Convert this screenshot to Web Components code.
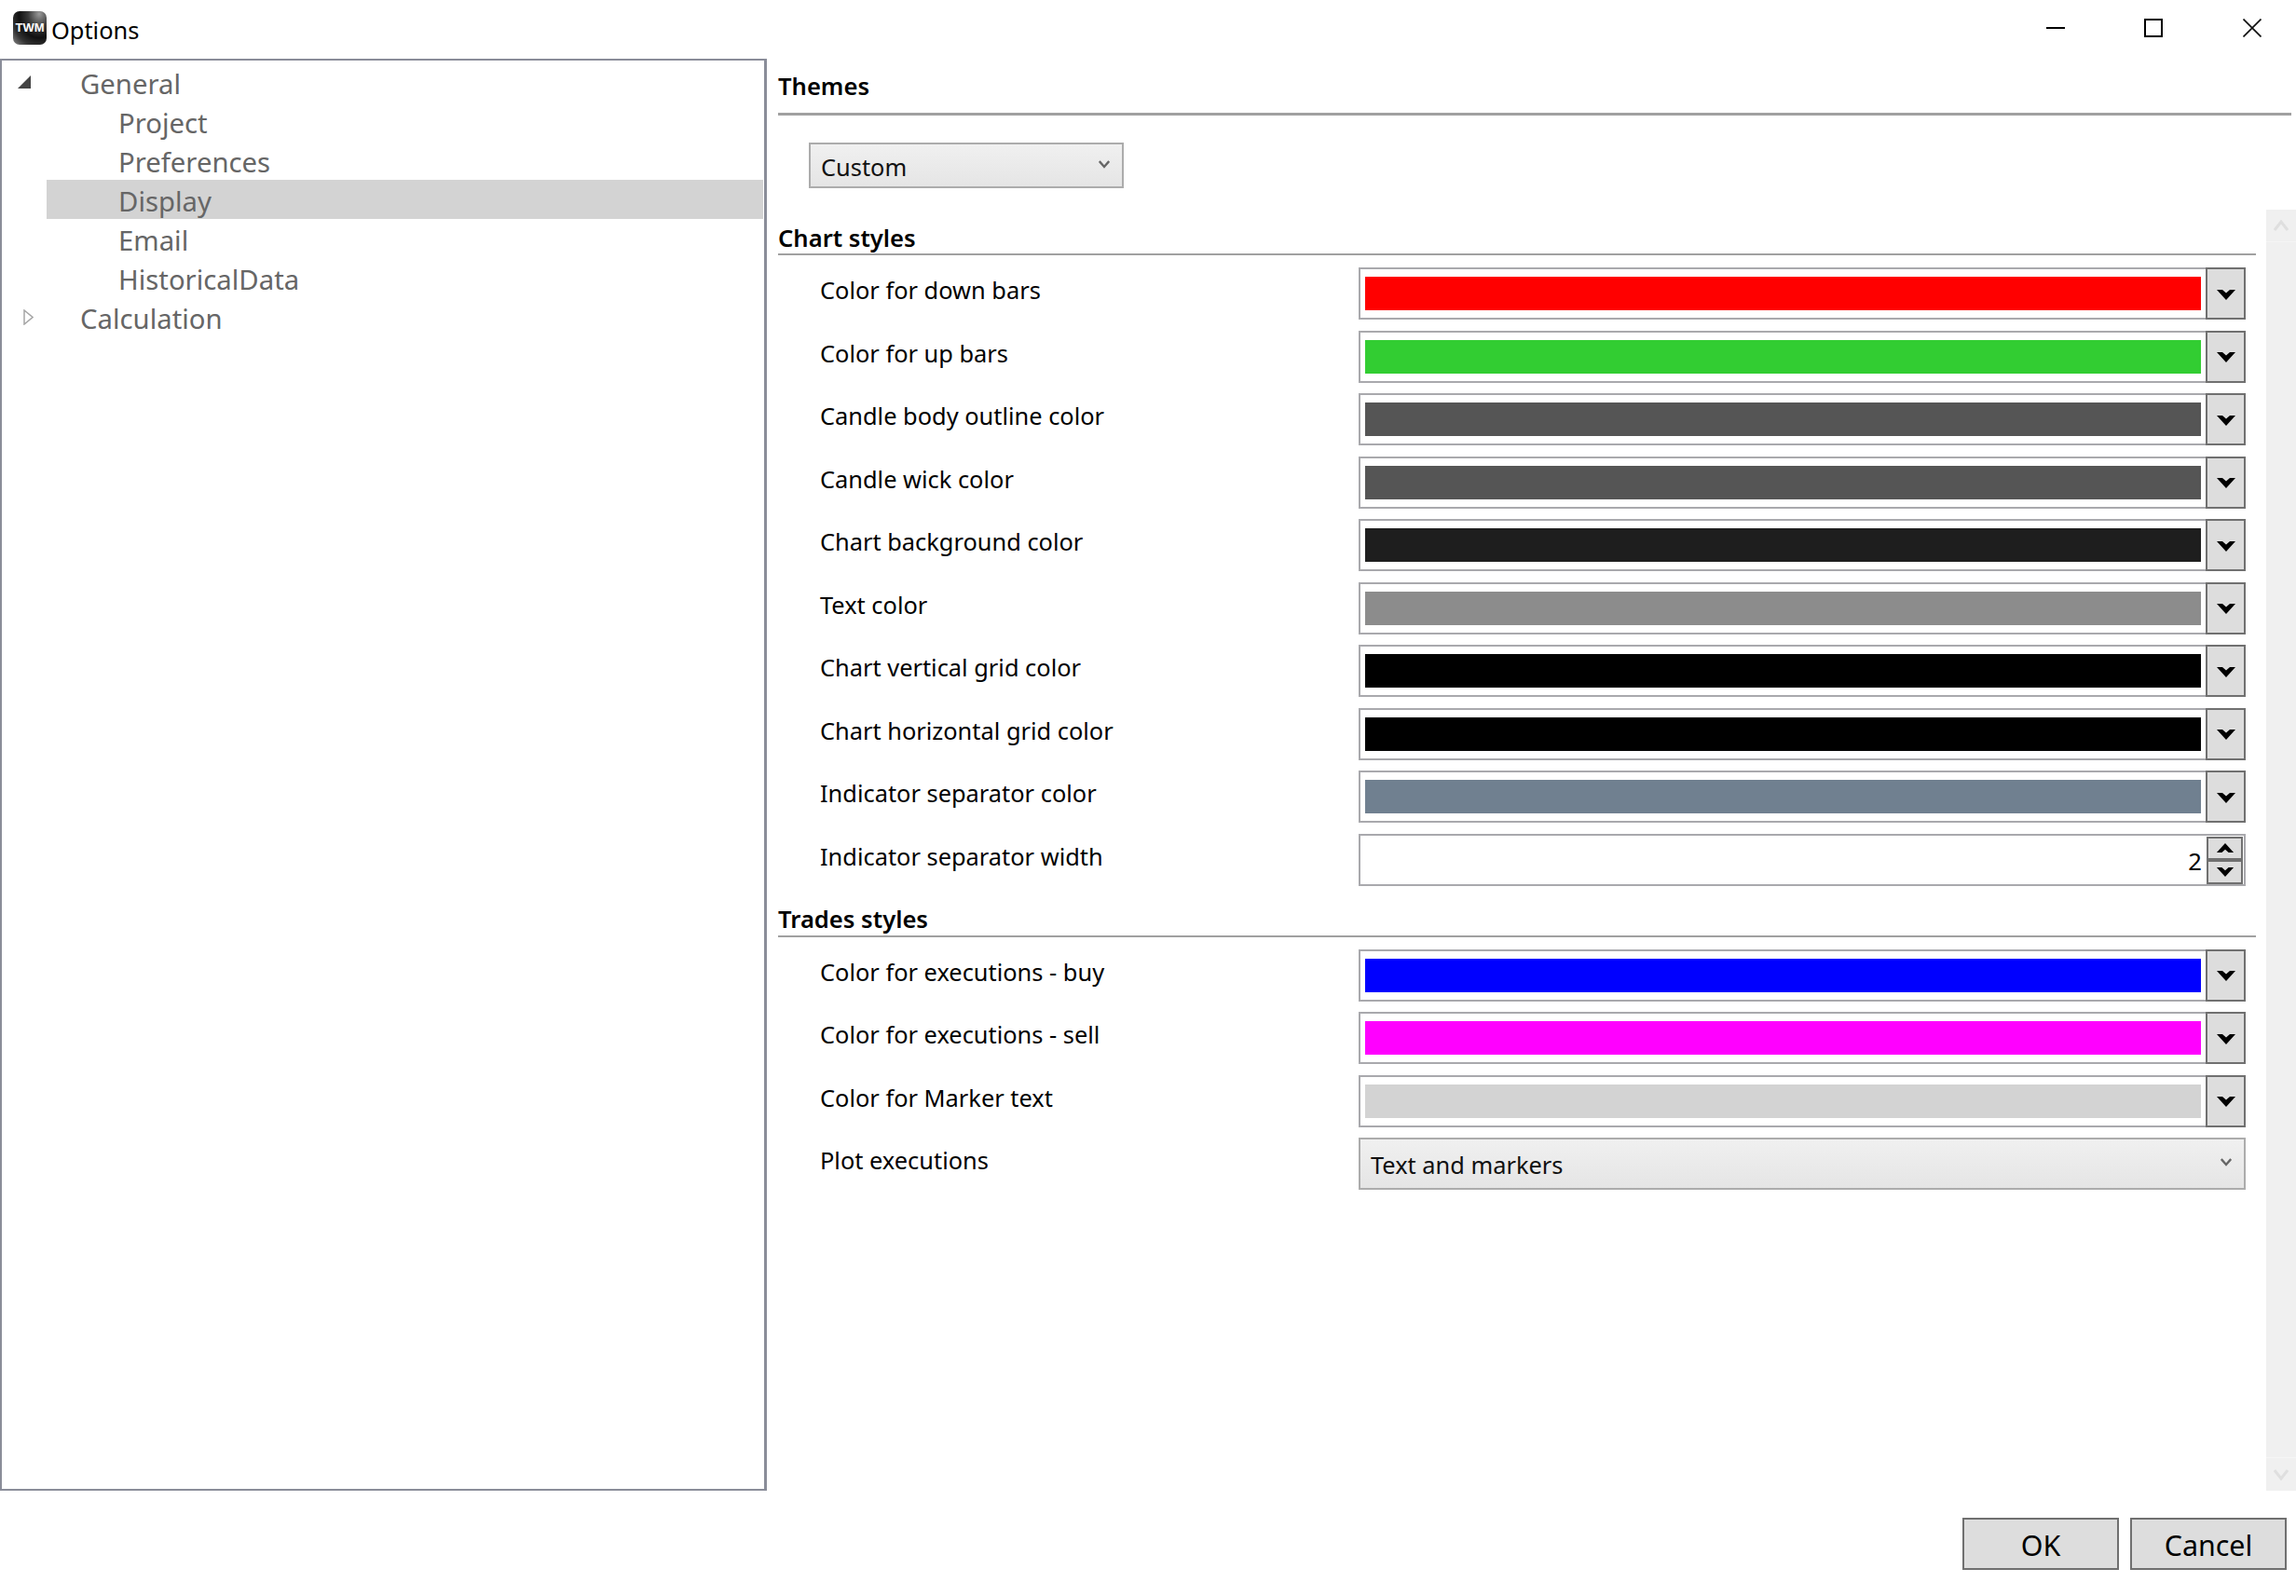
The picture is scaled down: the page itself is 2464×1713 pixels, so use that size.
<!DOCTYPE html>
<html>
<head>
<meta charset="utf-8">
<title>Options</title>
<style>
  html, body { margin: 0; padding: 0; background: #fff; }
  body { font-family: "Noto Sans", "Open Sans", sans-serif; }
</style>
</head>
<body>
<tw-window>
  <tw-titlebar slot="title">Options</tw-titlebar>
  <tw-tree slot="tree">
    <tw-tree-item level="0" arrow="open">General</tw-tree-item>
    <tw-tree-item level="1">Project</tw-tree-item>
    <tw-tree-item level="1">Preferences</tw-tree-item>
    <tw-tree-item level="1" selected>Display</tw-tree-item>
    <tw-tree-item level="1">Email</tw-tree-item>
    <tw-tree-item level="1">HistoricalData</tw-tree-item>
    <tw-tree-item level="0" arrow="closed">Calculation</tw-tree-item>
  </tw-tree>
  <tw-pane slot="pane">
    <tw-combo slot="themes" style="width:338px;height:49px">Custom</tw-combo>
    <tw-section heading="Chart styles">
      <tw-row label="Color for down bars"><tw-color color="#ff0000"></tw-color></tw-row>
      <tw-row label="Color for up bars"><tw-color color="#32cd32"></tw-color></tw-row>
      <tw-row label="Candle body outline color"><tw-color color="#555555"></tw-color></tw-row>
      <tw-row label="Candle wick color"><tw-color color="#555555"></tw-color></tw-row>
      <tw-row label="Chart background color"><tw-color color="#1e1e1e"></tw-color></tw-row>
      <tw-row label="Text color"><tw-color color="#8c8c8c"></tw-color></tw-row>
      <tw-row label="Chart vertical grid color"><tw-color color="#000000"></tw-color></tw-row>
      <tw-row label="Chart horizontal grid color"><tw-color color="#000000"></tw-color></tw-row>
      <tw-row label="Indicator separator color"><tw-color color="#708090"></tw-color></tw-row>
      <tw-row label="Indicator separator width"><tw-spinner>2</tw-spinner></tw-row>
    </tw-section>
    <tw-section heading="Trades styles" class="second">
      <tw-row label="Color for executions - buy"><tw-color color="#0000ff"></tw-color></tw-row>
      <tw-row label="Color for executions - sell"><tw-color color="#ff00ff"></tw-color></tw-row>
      <tw-row label="Color for Marker text"><tw-color color="#d3d3d3"></tw-color></tw-row>
      <tw-row label="Plot executions"><tw-combo style="height:56px">Text and markers</tw-combo></tw-row>
    </tw-section>
  </tw-pane>
  <tw-button slot="actions">OK</tw-button>
  <tw-button slot="actions">Cancel</tw-button>
</tw-window>

<script>
/**
 * html builds a <template> from a tagged string.
 */
function html(htmlString, ...values) {
  const template = document.createElement("template");
  template.innerHTML = String.raw(htmlString, ...values);
  return template;
}

function define(name, template, extra) {
  const cls = class extends HTMLElement {
    constructor() {
      super();
      this.attachShadow({ mode: "open" }).appendChild(template.content.cloneNode(true));
    }
    connectedCallback() {
      if (extra) extra(this);
    }
  };
  customElements.define(name, cls);
}

const chevron = `<svg width="20" height="11" viewBox="0 0 20 11"><path d="M0 0H6L10 3.5L14 0H20L10 11Z" fill="#000"/></svg>`;

define("tw-window", html`
  <style>
    * { box-sizing: border-box; }
    :host { display: flex; flex-direction: column; width: 2464px; height: 1713px; background: #fff; color: #000; overflow: hidden; }
    .middle { display: flex; height: 1537px; }
    .actions { display: flex; justify-content: flex-end; gap: 12px; padding: 29px 10px 0 0; }
  </style>
  <slot name="title"></slot>
  <div class="middle">
    <slot name="tree"></slot>
    <slot name="pane"></slot>
  </div>
  <div class="actions"><slot name="actions"></slot></div>
`);

define("tw-titlebar", html`
  <style>
    * { box-sizing: border-box; }
    :host { display: flex; align-items: flex-start; height: 63px; flex: none; box-sizing: border-box; }
    .logo {
      width: 36px; height: 36px; margin: 12px 5px 0 14px; border-radius: 7px;
      background: radial-gradient(ellipse at 78% 8%, #9a9a9a 0, #3a3a3a 30%, #111 55%, #333 75%, #8a8a8a 100%);
      display: flex; align-items: center; justify-content: center;
      color: #fff; font: bold 13px/1 "Liberation Sans", sans-serif; padding-bottom: 2px;
    }
    .text { font-size: 25.4px; line-height: 40px; margin-top: 12px; }
    .controls { margin-left: auto; display: flex; }
    .controls svg { display: block; }
    .controls svg:nth-child(1) { margin: 20px 0 0 0; }
    .controls svg:nth-child(2) { margin: 20px 0 0 85px; }
    .controls svg:nth-child(3) { margin: 20px 37px 0 86px; }
  </style>
  <span class="logo">TWM</span>
  <span class="text"><slot></slot></span>
  <div class="controls">
    <svg width="20" height="20" viewBox="0 0 20 20"><path d="M0 10H20" stroke="#000" stroke-width="2"/></svg>
    <svg width="20" height="20" viewBox="0 0 20 20"><rect x="1" y="1" width="18" height="18" fill="none" stroke="#000" stroke-width="2"/></svg>
    <svg width="20" height="20" viewBox="0 0 20 20"><path d="M0.5 0.5L19.5 19.5M19.5 0.5L0.5 19.5" stroke="#111" stroke-width="1.7"/></svg>
  </div>
`);

define("tw-tree", html`
  <style>
    * { box-sizing: border-box; }
    :host { display: block; box-sizing: border-box; width: 823px; height: 1537px; flex: none; border: 2px solid #8a8d99; border-right-width: 3px; padding: 2px 1px 0 0; background: #fff; }
  </style>
  <slot></slot>
`);

define("tw-tree-item", html`
  <style>
    * { box-sizing: border-box; }
    :host { display: block; height: 42px; font-size: 29.3px; color: #666; }
    .row { display: flex; height: 42px; }
    .gutter { width: 48px; flex: none; display: flex; align-items: center; }
    .gutter svg { display: none; }
    :host([arrow="open"]) .open { display: block; margin: 0 0 0 17px; }
    :host([arrow="closed"]) .closed { display: block; margin: 0 0 0 23px; }
    .label { flex: 1; padding-left: 36px; white-space: nowrap; line-height: 46px; height: 42px; }
    :host([level="1"]) .label { padding-left: 77px; }
    :host([selected]) .label { background: #d3d3d3; }
  </style>
  <div class="row">
    <div class="gutter">
      <svg class="open" width="14" height="14" viewBox="0 0 14 14"><path d="M14 0V14H0Z" fill="#444"/></svg>
      <svg class="closed" width="11" height="17" viewBox="0 0 11 17"><path d="M1 1L10 8.5L1 16Z" fill="#fff" stroke="#a6a6a6" stroke-width="1.5"/></svg>
    </div>
    <div class="label"><slot></slot></div>
  </div>
`);

define("tw-pane", html`
  <style>
    * { box-sizing: border-box; }
    :host { display: flex; flex-direction: column; flex: 1; min-width: 0; height: 1537px; }
    .top { height: 162px; flex: none; padding-left: 12px; padding-right: 5px; }
    h2 { margin: 0; height: 61px; border-bottom: 3px solid #a0a0a0; font-size: 25.6px; font-weight: 600; line-height: 34px; padding-top: 13px; }
    .combo { padding: 29px 0 0 33px; display: block; }
    .bottom { display: flex; flex: 1; min-height: 0; }
    .sections { flex: 1; min-width: 0; padding: 0 11px 0 12px; }
  </style>
  <div class="top">
    <h2>Themes</h2>
    <div class="combo"><slot name="themes"></slot></div>
  </div>
  <div class="bottom">
    <div class="sections"><slot></slot></div>
    <tw-scrollbar></tw-scrollbar>
  </div>
`);

define("tw-section", html`
  <style>
    * { box-sizing: border-box; }
    :host { display: block; width: 1586px; }
    :host(.second) { margin-top: 6.5px; }
    h3 { margin: 0; height: 49px; padding-top: 15px; border-bottom: 2px solid #a0a0a0; font-size: 25.6px; font-weight: 600; line-height: 32px; }
    :host(.second) h3 { padding-top: 14px; }
    .rows { display: flex; flex-direction: column; gap: 11.5px; padding-top: 13px; }
    :host(.second) .rows { padding-top: 12.5px; }
  </style>
  <h3></h3>
  <div class="rows"><slot></slot></div>
`, (el) => {
  el.shadowRoot.querySelector("h3").textContent = el.getAttribute("heading");
});

define("tw-row", html`
  <style>
    * { box-sizing: border-box; }
    :host { display: grid; grid-template-columns: 578px 952px; padding-left: 45px; height: 56px; }
    .label { font-size: 25.4px; line-height: 49px; white-space: nowrap; }
  </style>
  <div class="label"></div>
  <slot></slot>
`, (el) => {
  el.shadowRoot.querySelector(".label").textContent = el.getAttribute("label");
});

define("tw-color", html`
  <style>
    * { box-sizing: border-box; }
    :host { display: flex; height: 56px; }
    .box { flex: 1; border: 2px solid #a9a9ad; padding: 8px 3px 8px 5px; background: #fff; border-right: 0; }
    .swatch { height: 36px; width: 897px; box-shadow: 0 0 0 1px rgba(255,255,255,.6); }
    .btn { width: 43px; flex: none; border: 2px solid #707070; background: #dddddd; display: flex; align-items: center; justify-content: center; padding-top: 2px; }
    svg { display: block; }
  </style>
  <div class="box"><div class="swatch"></div></div>
  <div class="btn">${chevron}</div>
`, (el) => {
  el.shadowRoot.querySelector(".swatch").style.background = el.getAttribute("color");
});

define("tw-spinner", html`
  <style>
    * { box-sizing: border-box; }
    :host { display: flex; box-sizing: border-box; height: 56px; border: 2px solid #a9a9ad; background: #fff; }
    .value { flex: 1; text-align: right; font-size: 25.6px; line-height: 54px; padding-right: 5px; margin-top: 1px; }
    .btns { width: 39px; flex: none; margin: 0 1px 0 0; padding-top: 1px; display: flex; flex-direction: column; }
    .b { height: 26px; border: 2px solid #707070; background: #dddddd; display: flex; align-items: center; justify-content: center; }
    .up svg { transform: scaleY(-1); }
    svg { display: block; width: 20px; height: 10px; }
  </style>
  <div class="value"><slot></slot></div>
  <div class="btns">
    <div class="b up">${chevron}</div>
    <div class="b">${chevron}</div>
  </div>
`);

define("tw-combo", html`
  <style>
    * { box-sizing: border-box; }
    :host { display: flex; box-sizing: border-box; align-items: center; border: 2px solid #acacac; background: linear-gradient(#f0f0f0, #e5e5e5); font-size: 25.4px; color: #111; }
    .text { flex: 1; padding: 2px 0 0 11px; white-space: nowrap; line-height: 40px; }
    svg { display: block; margin: -3px 13px 0 0; }
  </style>
  <div class="text"><slot></slot></div>
  <svg width="12" height="9" viewBox="0 0 12 9"><path d="M0.8 1L6 7L11.2 1" fill="none" stroke="#666" stroke-width="2.4"/></svg>
`);

define("tw-scrollbar", html`
  <style>
    * { box-sizing: border-box; }
    :host { display: flex; flex-direction: column; width: 32px; flex: none; background: #f0f0f0; }
    .end { height: 35px; flex: none; display: flex; align-items: center; justify-content: center; border-bottom: 1px solid #f5f5f5; }
    .end.down { margin-top: auto; height: 36px; border-bottom: 0; border-top: 1px solid #f5f5f5; }
    svg { display: block; }
  </style>
  <div class="end"><svg width="16" height="12" viewBox="0 0 16 12"><path d="M1 11L8 2L15 11" fill="none" stroke="#dfdfdf" stroke-width="3"/></svg></div>
  <div class="end down"><svg width="16" height="12" viewBox="0 0 16 12"><path d="M1 1L8 10L15 1" fill="none" stroke="#dfdfdf" stroke-width="3"/></svg></div>
`);

define("tw-button", html`
  <style>
    * { box-sizing: border-box; }
    :host { display: flex; box-sizing: border-box; align-items: center; justify-content: center; width: 168px; height: 56px; border: 2px solid #707070; background: #dddddd; font-size: 30.4px; color: #000; padding-top: 2px; }
  </style>
  <slot></slot>
`);
</script>
</body>
</html>
